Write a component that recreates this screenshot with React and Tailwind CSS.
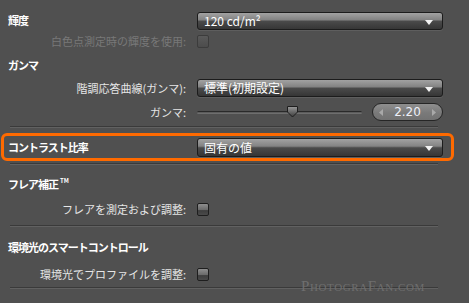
import React from 'react';

const jp = 'font-["Noto_Sans_CJK_JP",sans-serif]';

function Dropdown({ value, className = '' }) {
    return (
        <div className={`relative w-[246px] h-[18px] rounded-[3px] border border-[#1c1c1c] bg-[linear-gradient(to_bottom,#a2a2a2_0%,#838383_42%,#4a4a4a_52%,#363636_100%)] flex items-center pl-[6px] shadow-[0_1px_0_#5e5e5e] ${className}`}>
            <span className='text-white text-[12px] leading-none font-["Noto_Sans_CJK_JP","DejaVu_Sans",sans-serif]'>{value}</span>
            <svg className="absolute right-[9px] top-[7px]" width="8" height="5" viewBox="0 0 8 5">
                <path d="M0 0 H8 L4 5 Z" fill="#f2f2f2" />
            </svg>
        </div>
    );
}

function Checkbox({ disabled }) {
    return (
        <div className={`w-[12px] h-[13px] rounded-[2px] border ${disabled ? 'border-[#3c3c3c] bg-[linear-gradient(to_bottom,#5a5a5a,#4c4c4c)]' : 'border-[#1e1e1e] bg-[linear-gradient(to_bottom,#8e8e8e_0%,#6c6c6c_50%,#3e3e3e_60%,#4a4a4a_100%)]'}`} />
    );
}

function Divider({ className = '' }) {
    return <div className={`ml-[10px] w-[428px] h-[2px] border-t border-[#3a3a3a] border-b border-b-[#616161] ${className}`} />;
}

function Heading({ children }) {
    return <div className={`pl-[8px] w-[197px] text-white font-bold text-[11px] tracking-[-1px] leading-none ${jp}`}>{children}</div>;
}

function Label({ children, muted }) {
    return (
        <div className={`w-[197px] pr-[11px] text-right text-[11px] leading-none ${muted ? 'text-[#787878]' : 'text-[#e6e6e6]'} ${jp}`}>{children}</div>
    );
}

export default function App() {
    return (
        <div className="relative w-[469px] h-[303px] bg-[#505050] overflow-hidden pt-[12px]">
            <div className="flex items-center h-[17px]">
                <Heading>輝度</Heading>
                <Dropdown value="120 cd/m²" className="h-[17px]" />
            </div>

            <div className="flex items-center h-[12px] mt-[6px]">
                <Label muted>白色点測定時の輝度を使用:</Label>
                <Checkbox disabled />
            </div>

            <div className="flex items-center h-[14px] mt-[11px]">
                <Heading>ガンマ</Heading>
            </div>

            <div className="flex items-center h-[18px] mt-[7px]">
                <Label>階調応答曲線(ガンマ):</Label>
                <Dropdown value="標準(初期設定)" />
            </div>

            <div className="flex items-center h-[18px] mt-[6px]">
                <Label>ガンマ:</Label>
                <div className="relative w-[165px] h-[18px] flex items-center">
                    <div className="w-full h-[3px] rounded-full border-t border-[#2a2a2a] bg-[#5c5c5c] border-b border-b-[#6e6e6e]" />
                    <svg className="absolute left-[89px] top-[3px]" width="13" height="12" viewBox="0 0 13 12">
                        <defs>
                            <linearGradient id="thumb" x1="0" y1="0" x2="0" y2="1">
                                <stop offset="0" stopColor="#9a9a9a" />
                                <stop offset="0.5" stopColor="#6a6a6a" />
                                <stop offset="1" stopColor="#3c3c3c" />
                            </linearGradient>
                        </defs>
                        <path d="M1.5 0.5 H11.5 V6 L6.5 11 L1.5 6 Z" fill="url(#thumb)" stroke="#1e1e1e" strokeWidth="1" />
                    </svg>
                </div>
                <div className="ml-[10px] relative w-[71px] h-[18px] rounded-full border border-[#262626] bg-[linear-gradient(to_bottom,#8e8e8e,#7a7a7a_55%,#727272)] flex items-center justify-center">
                    <svg className="absolute left-[6px] top-[5px]" width="4" height="7" viewBox="0 0 4 7">
                        <path d="M4 0 V7 L0 3.5 Z" fill="#a9a9a9" />
                    </svg>
                    <span className='text-[#eef0f8] text-[12px] leading-none font-["DejaVu_Sans",sans-serif]'>2.20</span>
                    <svg className="absolute right-[6px] top-[5px]" width="4" height="7" viewBox="0 0 4 7">
                        <path d="M0 0 V7 L4 3.5 Z" fill="#a9a9a9" />
                    </svg>
                </div>
            </div>

            <Divider className="mt-[5px]" />

            <div className="flex items-center h-[19px] mt-[10px]">
                <Heading>コントラスト比率</Heading>
                <Dropdown value="固有の値" className="h-[19px]" />
            </div>

            <Divider className="mt-[6px]" />

            <div className="flex items-center h-[14px] mt-[12px]">
                <Heading>
                    フレア補正<span className="inline-block align-top -mt-[1px] ml-[2px] text-[6px] tracking-normal">TM</span>
                </Heading>
            </div>

            <div className="flex items-center h-[13px] mt-[12px]">
                <Label>フレアを測定および調整:</Label>
                <Checkbox />
            </div>

            <Divider className="mt-[9px]" />

            <div className="flex items-center h-[14px] mt-[13px]">
                <Heading>環境光のスマートコントロール</Heading>
            </div>

            <div className="flex items-center h-[14px] mt-[13px]">
                <Label>環境光でプロファイルを調整:</Label>
                <Checkbox />
            </div>

            <Divider className="mt-[6px]" />

            {/* highlight annotation */}
            <div className="absolute left-[1px] top-[133px] w-[453px] h-[28px] rounded-[6px] border-[3px] border-[#ff6a00]" />

            {/* watermark */}
            <div className='absolute left-[301px] top-[279px] text-[#6e6e6e] text-[15px] leading-none tracking-[0.6px] [font-variant:small-caps] font-["Liberation_Serif",serif]'>
                PhotograFan.com
            </div>
        </div>
    );
}
